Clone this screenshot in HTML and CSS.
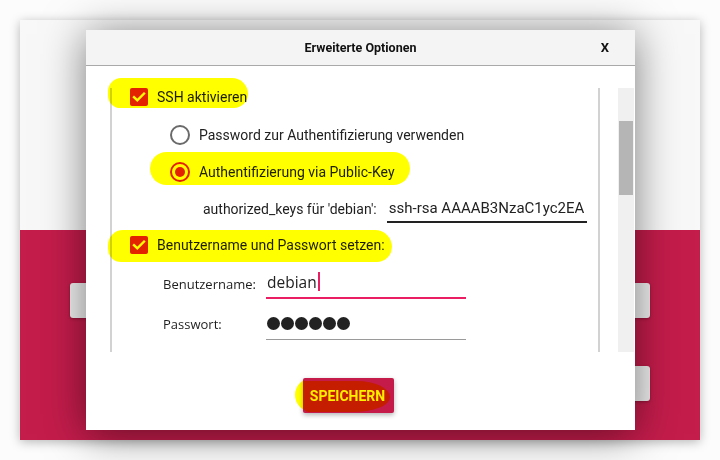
FILE: index.html
```html
<!DOCTYPE html>
<html lang="de">
<head>
<meta charset="utf-8">
<title>Erweiterte Optionen</title>
<link rel="stylesheet" href="styles.css">
</head>
<body>
<div class="page">
  <div class="card">
    <div class="card-top"></div>
    <div class="card-bottom">
      <div class="col"><div class="ghost"></div></div>
      <div class="col"><div class="ghost"></div><div class="ghost"></div></div>
    </div>
  </div>

  <div class="dialog">
    <div class="dialog-head">
      <span></span>
      <span class="title">Erweiterte Optionen</span>
      <span class="close">X</span>
    </div>
    <div class="dialog-body">
      <div class="viewport">
        <div class="options">
          <div class="row row-ssh mark mark-ssh">
            <span class="checkbox"><svg width="18" height="18" viewBox="0 0 18 18"><path d="M4 9.2l3.3 3.2L14 5.6" fill="none" stroke="#fff" stroke-width="2.4" stroke-linecap="square"/></svg></span>
            <span class="label-main">SSH aktivieren</span>
          </div>
          <div class="row row-radio1">
            <span class="radio"></span>
            <span class="label-radio">Password zur Authentifizierung verwenden</span>
          </div>
          <div class="row row-radio2 mark mark-radio">
            <span class="radio radio-on"><span class="dot"></span></span>
            <span class="label-radio">Authentifizierung via Public-Key</span>
          </div>
          <div class="row row-keys">
            <span class="label-keys">authorized_keys für 'debian':</span>
            <span class="field field-keys">ssh-rsa AAAAB3NzaC1yc2EA</span>
          </div>
          <div class="row row-user-check mark mark-user">
            <span class="checkbox"><svg width="18" height="18" viewBox="0 0 18 18"><path d="M4 9.2l3.3 3.2L14 5.6" fill="none" stroke="#fff" stroke-width="2.4" stroke-linecap="square"/></svg></span>
            <span class="label-main">Benutzername und Passwort setzen:</span>
          </div>
          <div class="row row-user">
            <span class="label-os">Benutzername:</span>
            <span class="field field-user">debian<span class="caret"></span></span>
          </div>
          <div class="row row-pass">
            <span class="label-os">Passwort:</span>
            <span class="field field-pass"><i></i><i></i><i></i><i></i><i></i><i></i></span>
          </div>
        </div>
      </div>
      <div class="scrollbar"><div class="thumb"></div></div>
    </div>
    <div class="dialog-foot">
      <span class="blob-yellow"></span>
      <button class="save"><span class="blob-red"></span><span class="save-text">SPEICHERN</span></button>
    </div>
  </div>
</div>
</body>
</html>
```

FILE: styles.css
```css
* { box-sizing: border-box; }

html, body {
  margin: 0;
  padding: 0;
  width: 720px;
  height: 460px;
  overflow: hidden;
  background: #fcfcfc;
  font-family: Roboto, "Liberation Sans", sans-serif;
}

.page {
  position: relative;
  width: 720px;
  height: 460px;
  padding: 20px;
}

.card {
  width: 680px;
  height: 420px;
  display: flex;
  flex-direction: column;
  box-shadow: 0 2px 10px rgba(0, 0, 0, 0.28);
}

.card-top {
  height: 210px;
  background: #f8f8f8;
}

.card-bottom {
  flex: 1;
  background: #c41c4b;
  display: grid;
  grid-template-columns: 1fr 1fr;
  column-gap: 40px;
  padding: 53px 50px 0 50px;
}

.col {
  display: flex;
  flex-direction: column;
  gap: 48px;
}

.ghost {
  height: 35px;
  background: #f2f2f2;
  border-radius: 3px;
  box-shadow: 0 1px 3px rgba(0, 0, 0, 0.3);
}

/* dialog */
.dialog {
  position: absolute;
  left: 86px;
  top: 30px;
  width: 549px;
  height: 400px;
  background: #fff;
  box-shadow: 0 4px 40px rgba(0, 0, 0, 0.5);
  display: flex;
  flex-direction: column;
}

.dialog-head {
  height: 36px;
  background: #f4f4f4;
  border-bottom: 1px solid #a9a9a9;
  display: grid;
  grid-template-columns: 1fr auto 1fr;
  align-items: center;
  padding-bottom: 1px;
}

.title {
  font-weight: 700;
  font-size: 12.5px;
  color: #111;
}

.close {
  justify-self: end;
  padding-right: 26px;
  font-weight: 700;
  font-size: 13px;
  color: #111;
}

.dialog-body {
  height: 286px;
  display: flex;
  gap: 18px;
}

.viewport {
  width: 514px;
  height: 286px;
  overflow: hidden;
  padding: 22px 0 0 24px;
}

.options {
  position: relative;
  width: 490px;
  height: 264px;
  border-left: 2px solid #d2d2d2;
  border-right: 2px solid #d2d2d2;
}

.scrollbar {
  margin-top: 22px;
  width: 16px;
  height: 264px;
  background: #f0f0f0;
  padding: 33px 1px 0 1px;
}

.thumb {
  height: 74px;
  background: #b5b5b5;
}

/* rows */
.row {
  position: relative;
  display: flex;
  align-items: center;
}

.mark::before {
  content: "";
  position: absolute;
  background: #ffff00;
  mix-blend-mode: multiply;
  border-radius: 16px;
  z-index: 2;
}

.row-ssh {
  height: 18px;
  padding-left: 18px;
  gap: 9px;
}
.mark-ssh::before {
  left: -4px;
  top: -10px;
  width: 140px;
  height: 30px;
  border-radius: 15px 18px 16px 14px;
}

.checkbox {
  width: 18px;
  height: 18px;
  background: #e3220c;
  border-radius: 2px;
  display: block;
}
.checkbox svg { display: block; }

.label-main {
  font-size: 14px;
  color: #1e1e1e;
}

.row-radio1 {
  margin-top: 19px;
  height: 20px;
  padding-left: 58px;
  gap: 9px;
}

.row-radio2 {
  margin-top: 17px;
  height: 20px;
  padding-left: 58px;
  gap: 9px;
}
.mark-radio::before {
  left: 38px;
  top: -10px;
  width: 260px;
  height: 33px;
  border-radius: 17px;
}

.radio {
  width: 20px;
  height: 20px;
  border: 2px solid #6a6a6a;
  border-radius: 50%;
  display: flex;
  align-items: center;
  justify-content: center;
}
.radio-on { border-color: #e3220c; }
.dot {
  width: 10px;
  height: 10px;
  border-radius: 50%;
  background: #e3220c;
}

.label-radio {
  font-size: 14px;
  color: #222;
}

.row-keys {
  margin-top: 13px;
  height: 28px;
  padding-left: 91px;
  gap: 10px;
}

.label-keys {
  font-size: 14px;
  color: #1e1e1e;
}

.field {
  display: flex;
  align-items: center;
  height: 100%;
  overflow: hidden;
  white-space: nowrap;
}

.field-keys {
  width: 200px;
  border-bottom: 2px solid #222;
  font-size: 15px;
  color: #222;
  padding-left: 2px;
  padding-bottom: 1px;
}

.row-user-check {
  margin-top: 13px;
  height: 18px;
  padding-left: 18px;
  gap: 9px;
}
.mark-user::before {
  left: -4px;
  top: -6px;
  width: 284px;
  height: 32px;
  border-radius: 16px 18px 16px 14px;
}

.label-os {
  font-family: "Open Sans", "Liberation Sans", sans-serif;
  font-size: 13px;
  color: #1e1e1e;
  width: 103px;
}

.row-user {
  margin-top: 14px;
  height: 31px;
  padding-left: 51px;
}

.field-user {
  width: 200px;
  border-bottom: 2px solid #e91e63;
  font-family: "Open Sans", "Liberation Sans", sans-serif;
  font-size: 15.5px;
  color: #222;
  padding-left: 1px;
  padding-bottom: 2px;
}

.caret {
  display: inline-block;
  width: 2px;
  height: 19px;
  background: #e91e63;
  margin-left: 1px;
}

.row-pass {
  margin-top: 9px;
  height: 32px;
  padding-left: 51px;
}

.field-pass {
  width: 200px;
  border-bottom: 1px solid #9a9a9a;
  gap: 1px;
  padding-left: 1px;
  padding-bottom: 1px;
}
.field-pass i {
  display: block;
  width: 13px;
  height: 13px;
  border-radius: 50%;
  background: #222;
}

/* footer */
.dialog-foot {
  position: relative;
  flex: 1;
  padding: 26px 0 0 217px;
}

.blob-yellow {
  position: absolute;
  left: 209px;
  top: 26px;
  width: 34px;
  height: 34px;
  border-radius: 50%;
  background: #ffff00;
}

.save {
  position: relative;
  width: 91px;
  height: 35px;
  border: none;
  border-radius: 2px;
  background: #c51b4b;
  box-shadow: 0 2px 5px rgba(0, 0, 0, 0.3);
  overflow: hidden;
  padding: 0;
  font-family: Roboto, "Liberation Sans", sans-serif;
  font-weight: 700;
  font-size: 14px;
  color: #fff000;
  display: flex;
  align-items: center;
  justify-content: center;
}

.blob-red {
  position: absolute;
  left: 0;
  top: 3px;
  right: 4px;
  bottom: 1px;
  background: #c41d00;
  border-radius: 2px 40% 45% 6px / 2px 55% 50% 6px;
}

.save-text {
  position: relative;
  padding-top: 1px;
  padding-right: 2px;
}
```
